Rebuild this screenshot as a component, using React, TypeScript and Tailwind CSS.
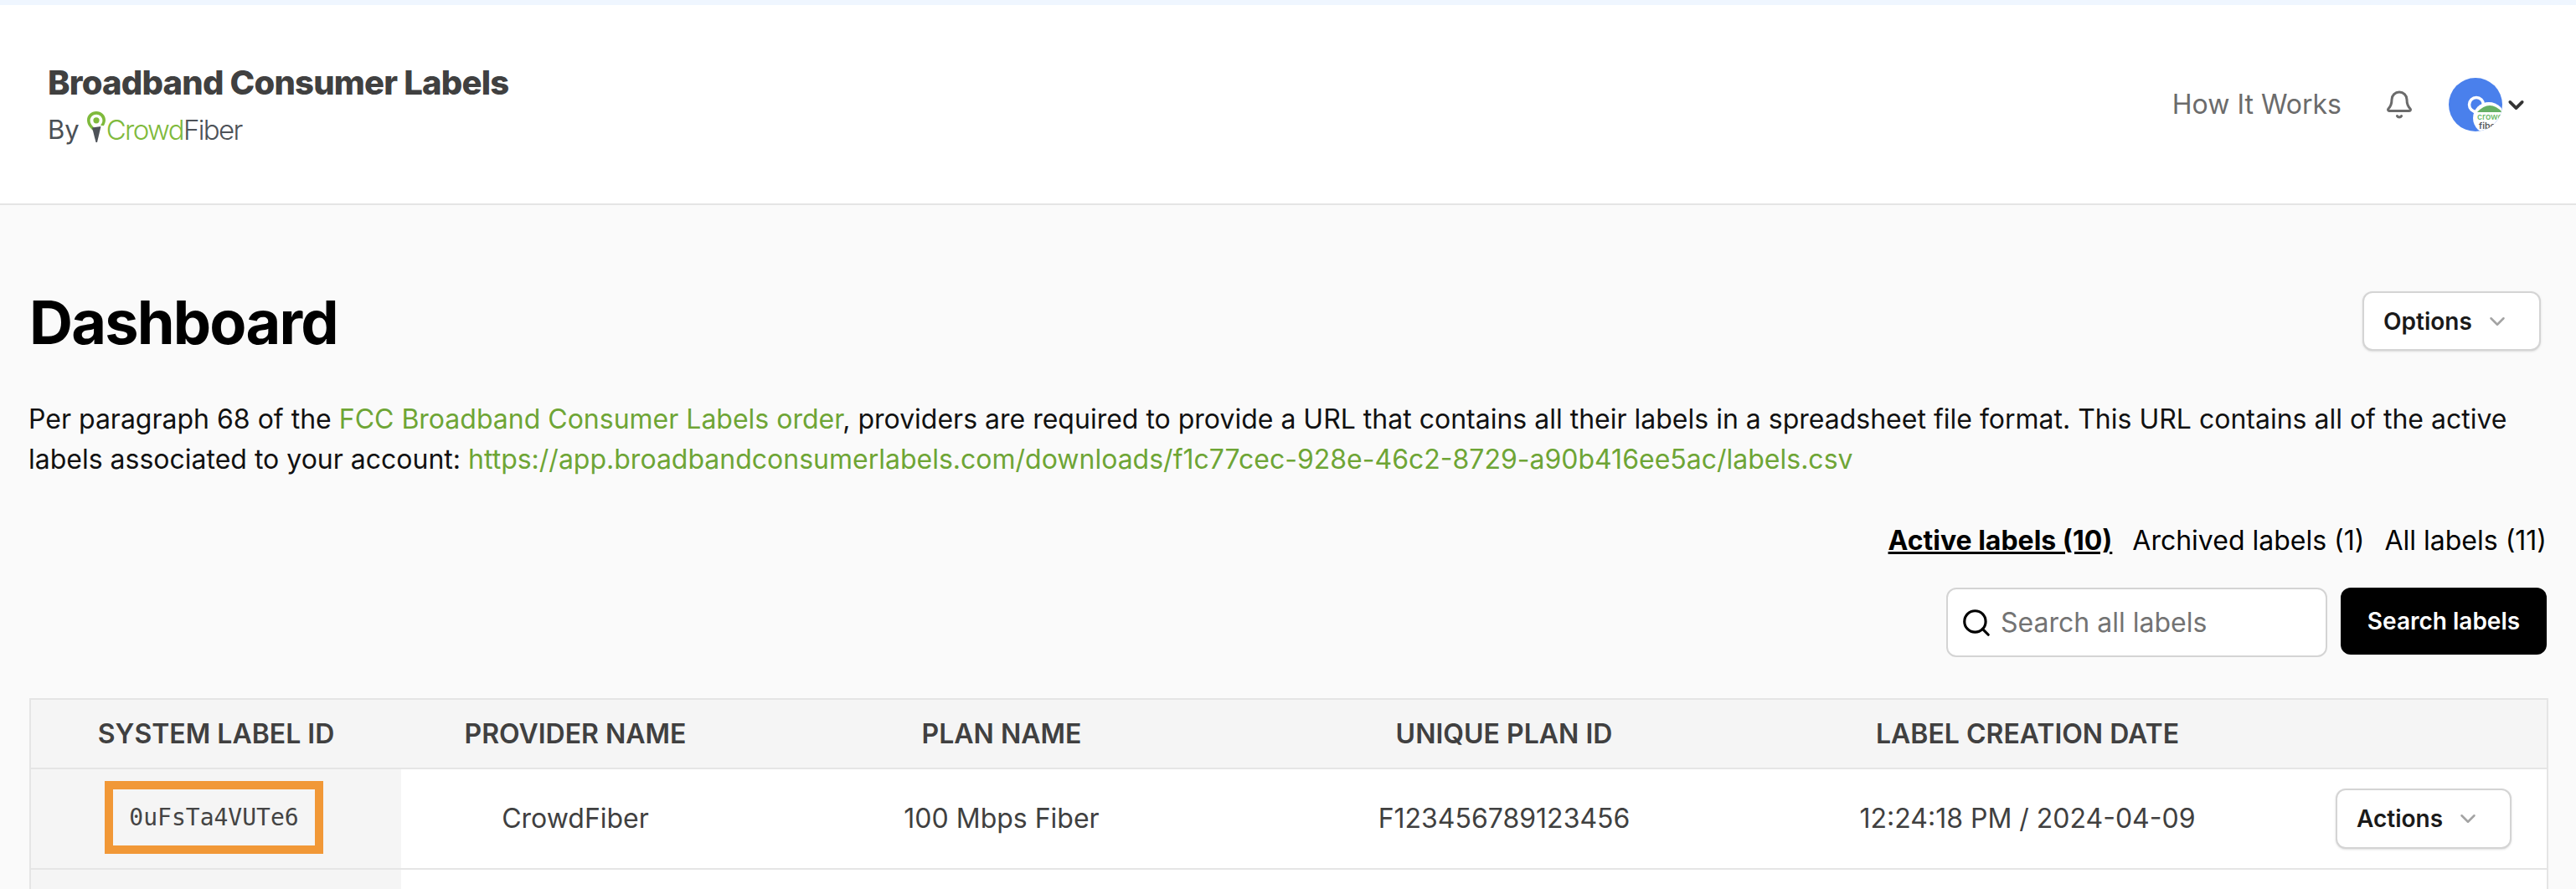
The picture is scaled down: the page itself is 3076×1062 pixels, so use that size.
import { Bell, ChevronDown, Search } from "lucide-react";

const headers = ["SYSTEM LABEL ID", "PROVIDER NAME", "PLAN NAME", "UNIQUE PLAN ID", "LABEL CREATION DATE", ""];

function Pin() {
  return (
    <svg width="22" height="37" viewBox="0 0 22 37" className="mb-[6px] mr-[1px]">
      <path
        d="M11 0C5 0 0 4.600 0 10.400c0 5 3.400 9.600 7.600 12.600l1-3.600C6 17.600 3.600 14.200 3.600 11 3.600 7 7 3.800 11 3.800s7.400 3.200 7.400 7.200c0 2.200-1 4.200-2.600 5.800l4 .4C21 15 22 12.800 22 10.400 22 4.600 17 0 11 0z"
        fill="#7fba3c"
      />
      <circle cx="11" cy="10.800" r="3.600" fill="#7fba3c" />
      <path d="M6 19.500l10.500-1.500-4.500 19h-1.500z" fill="#4d5258" />
    </svg>
  );
}

function Avatar() {
  return (
    <svg width="64" height="64" viewBox="0 0 64 64">
      <defs>
        <clipPath id="avatar-clip">
          <circle cx="32" cy="32" r="32" />
        </clipPath>
      </defs>
      <g clipPath="url(#avatar-clip)">
        <rect width="64" height="64" fill="#4a80ec" />
        <circle cx="33" cy="32" r="8.500" fill="none" stroke="#fff" strokeWidth="3.500" />
        <circle cx="48" cy="48" r="19" fill="#fff" />
        <path d="M34 41Q49 25 64 41z" fill="#66b065" />
        <text x="34" y="50" fontSize="10.500" fontWeight="500" fontFamily="Inter, sans-serif" fill="#66b865">
          crowd
        </text>
        <text x="36" y="61" fontSize="10.500" fontWeight="600" fontFamily="Inter, sans-serif" fill="#55585c">
          fiber
        </text>
      </g>
    </svg>
  );
}

function SelectButton({ label, className }: { label: string; className: string }) {
  return (
    <button
      className={`flex items-center rounded-[12px] border-2 border-[#d4d4d4] bg-white pl-[23px] text-[28px] font-semibold text-[#1a1a1a] shadow-sm ${className}`}
    >
      {label}
      <ChevronDown className="ml-[15px] h-[30px] w-[30px] text-[#a3a3a3]" strokeWidth={2} />
    </button>
  );
}

export default function App() {
  return (
    <div className="h-[1062px] w-[3076px] overflow-hidden bg-[#fafafa] font-['Inter',sans-serif]">
      <div className="h-[6px] bg-[#eff6ff]" />
      <header className="flex h-[239px] items-start justify-between border-b-2 border-[#e5e5e5] bg-white pl-[57px] pr-[57px]">
        <div className="pt-[70px]">
          <h1 className="text-[40px] font-extrabold leading-[46px] tracking-[-0.02em] text-[#404040]">
            Broadband Consumer Labels
          </h1>
          <div className="mt-[11px] flex items-center text-[31px] leading-[40px] text-[#4b5056]">
            <span className="mr-[9px]">By</span>
            <Pin />
            <span className="text-[33px] font-light tracking-[-0.05em] text-[#7fba3c]">Crowd</span>
            <span className="text-[33px] font-light tracking-[-0.05em] text-[#4d5258]">Fiber</span>
          </div>
        </div>
        <div className="flex items-center pt-[85px]">
          <a className="text-[32px] leading-[68px] text-[#6b6b6b]">How It Works</a>
          <Bell className="ml-[51px] h-[36px] w-[36px] text-[#6b6b6b]" strokeWidth={2} />
          <div className="ml-[41px]">
            <Avatar />
          </div>
          <ChevronDown className="ml-[2px] h-[29px] w-[29px] text-[#333]" strokeWidth={3} />
        </div>
      </header>

      <main className="pl-[35px] pr-[35px]">
        <div className="mt-[103px] flex h-[71px] items-center justify-between pr-[7px]">
          <h2 className="pt-[2px] text-[72px] font-bold leading-none tracking-[-0.025em] text-black">Dashboard</h2>
          <SelectButton label="Options" className="h-[71px] w-[213px]" />
        </div>

        <p className="-ml-[1px] mt-[58px] text-[32px] leading-[48px] text-[#111]">
          Per paragraph 68 of the <a className="text-[#6ea535]">FCC Broadband Consumer Labels order</a>, providers are
          required to provide a URL that contains all their labels in a spreadsheet file format. This URL contains all of
          the active labels associated to your account:{" "}
          <a className="text-[#6ea535]">
            https://app.broadbandconsumerlabels.com/downloads/f1c77cec-928e-46c2-8729-a90b416ee5ac/labels.csv
          </a>
        </p>

        <div className="mt-[49px] flex justify-end gap-[24px] text-[32px] leading-[48px] text-black">
          <a className="font-bold underline">Active labels (10)</a>
          <a>Archived labels (1)</a>
          <a>All labels (11)</a>
        </div>

        <div className="mt-[32px] flex items-start justify-end gap-[16px]">
          <div className="flex h-[83px] w-[455px] items-center rounded-[12px] border-2 border-[#d4d4d4] bg-white pl-[15px]">
            <Search className="h-[38px] w-[38px] text-black" strokeWidth={2} />
            <span className="ml-[10px] text-[32px] text-[#737373]">Search all labels</span>
          </div>
          <button className="h-[80px] w-[246px] rounded-[12px] bg-black text-[28px] font-semibold text-white">
            Search labels
          </button>
        </div>

        <table className="mt-[49px] w-[3006px] table-fixed border-collapse border-2 border-[#e5e5e5]">
          <colgroup>
            <col className="w-[443px]" />
            <col className="w-[416px]" />
            <col className="w-[602px]" />
            <col className="w-[598px]" />
            <col className="w-[652px]" />
            <col className="w-[295px]" />
          </colgroup>
          <thead>
            <tr className="h-[83px] bg-[#f5f5f5]">
              {headers.map((h) => (
                <th key={h} className="text-center text-[32px] font-semibold text-[#404040]">
                  {h}
                </th>
              ))}
            </tr>
          </thead>
          <tbody className="text-center text-[32px] text-[#404040]">
            <tr className="h-[120px] border-t-2 border-[#e5e5e5] bg-white">
              <td className="bg-[#f5f5f5]">
                <div className="flex justify-center pb-[3px] pr-[5px]">
                  <span className="w-[261px] border-[10px] border-[#f19837] py-[18px] font-['DejaVu_Sans_Mono',monospace] text-[28px] leading-[31px] text-[#444]">
                    0uFsTa4VUTe6
                  </span>
                </div>
              </td>
              <td>CrowdFiber</td>
              <td>100 Mbps Fiber</td>
              <td>F123456789123456</td>
              <td>12:24:18 PM / 2024-04-09</td>
              <td>
                <div className="flex justify-center">
                  <SelectButton label="Actions" className="h-[72px] w-[210px]" />
                </div>
              </td>
            </tr>
            <tr className="h-[120px] border-t-2 border-[#e5e5e5] bg-white">
              <td className="bg-[#f5f5f5]" />
              <td />
              <td />
              <td />
              <td />
              <td />
            </tr>
          </tbody>
        </table>
      </main>
    </div>
  );
}
